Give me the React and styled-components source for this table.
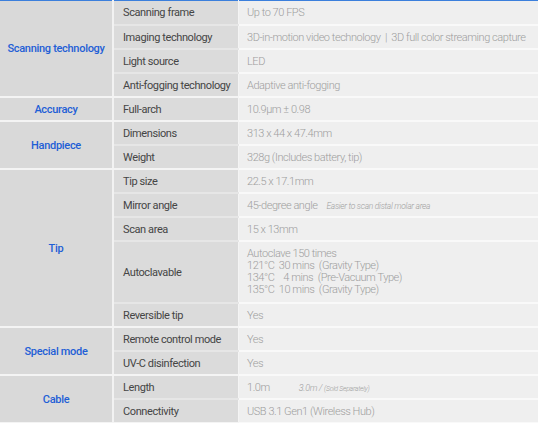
import React from 'react';
import styled, { createGlobalStyle } from 'styled-components';

const GlobalStyle = createGlobalStyle`
  body {
    margin: 0;
    background: #ffffff;
    font-family: Roboto, "Liberation Sans", sans-serif;
  }
`;

const Table = styled.table`
  width: 538px;
  border-collapse: collapse;
  border-top: 1px solid #3b7fdc;
  border-bottom: 1px solid #aac6ee;
  table-layout: fixed;

  tr:first-child td {
    height: 23px;
  }
`;

const GroupCell = styled.td`
  width: 112px;
  background: #d9d9d9;
  color: #1f5fd6;
  font-size: 11px;
  font-weight: 500;
  letter-spacing: -0.3px;
  text-align: center;
  vertical-align: middle;
  border-bottom: 2px solid #f4f4f4;
  border-right: 2px solid #f2f2f2;
  padding: 0;
`;

const LabelCell = styled.td`
  width: 115px;
  background: #dbdbdb;
  color: #454545;
  font-size: 11px;
  letter-spacing: -0.4px;
  padding: 0 0 0 9px;
  height: 22px;
  border-bottom: 2px solid ${p => (p.$last ? '#f4f4f4' : '#e6e6e6')};
  border-right: 1px solid #f4f4f4;
  white-space: nowrap;
`;

const ValueCell = styled.td`
  background: #efefef;
  color: #9e9e9e;
  font-size: 11px;
  font-weight: 300;
  letter-spacing: -0.45px;
  padding: ${p => (p.$multi ? '6px 0 6px 8px' : '0 0 0 8px')};
  line-height: ${p => (p.$multi ? '12px' : 'normal')};
  border-bottom: 2px solid #f9f9f9;
  white-space: pre;
`;

const Note = styled.span`
  font-style: italic;
  font-size: ${p => p.$size || 8.5}px;
  letter-spacing: -0.3px;
  margin-left: ${p => p.$gap || 8}px;
`;

const Tiny = styled.span`
  font-size: 7px;
`;

const groups = [
  {
    name: 'Scanning technology',
    rows: [
      ['Scanning frame', 'Up to 70 FPS'],
      ['Imaging technology', '3D-in-motion video technology  |  3D full color streaming capture'],
      ['Light source', 'LED'],
      ['Anti-fogging technology', 'Adaptive anti-fogging'],
    ],
  },
  { name: 'Accuracy', rows: [['Full-arch', '10.9μm ± 0.98']] },
  {
    name: 'Handpiece',
    rows: [
      ['Dimensions', '313 x 44 x 47.4mm'],
      ['Weight', '328g (Includes battery, tip)'],
    ],
  },
  {
    name: 'Tip',
    rows: [
      ['Tip size', '22.5 x 17.1mm'],
      ['Mirror angle', <>45-degree angle<Note $gap={9}>Easier to scan distal molar area</Note></>],
      ['Scan area', '15 x 13mm'],
      [
        'Autoclavable',
        'Autoclave 150 times\n121°C  30 mins  (Gravity Type)\n134°C    4 mins  (Pre-Vacuum Type)\n135°C  10 mins  (Gravity Type)',
        true,
      ],
      ['Reversible tip', 'Yes'],
    ],
  },
  {
    name: 'Special mode',
    rows: [
      ['Remote control mode', 'Yes'],
      ['UV-C disinfection', 'Yes'],
    ],
  },
  {
    name: 'Cable',
    rows: [
      ['Length', <>1.0m<Note $gap={29} $size={9}>3.0m / <Tiny>(Sold Separately)</Tiny></Note></>],
      ['Connectivity', 'USB 3.1 Gen1 (Wireless Hub)'],
    ],
  },
];

const App = () => (
  <>
    <GlobalStyle />
    <Table>
      <tbody>
        {groups.map(g =>
          g.rows.map(([label, value, multi], i) => (
            <tr key={g.name + i}>
              {i === 0 && <GroupCell rowSpan={g.rows.length}>{g.name}</GroupCell>}
              <LabelCell $last={i === g.rows.length - 1}>{label}</LabelCell>
              <ValueCell $multi={multi}>{value}</ValueCell>
            </tr>
          ))
        )}
      </tbody>
    </Table>
  </>
);

export default App;
